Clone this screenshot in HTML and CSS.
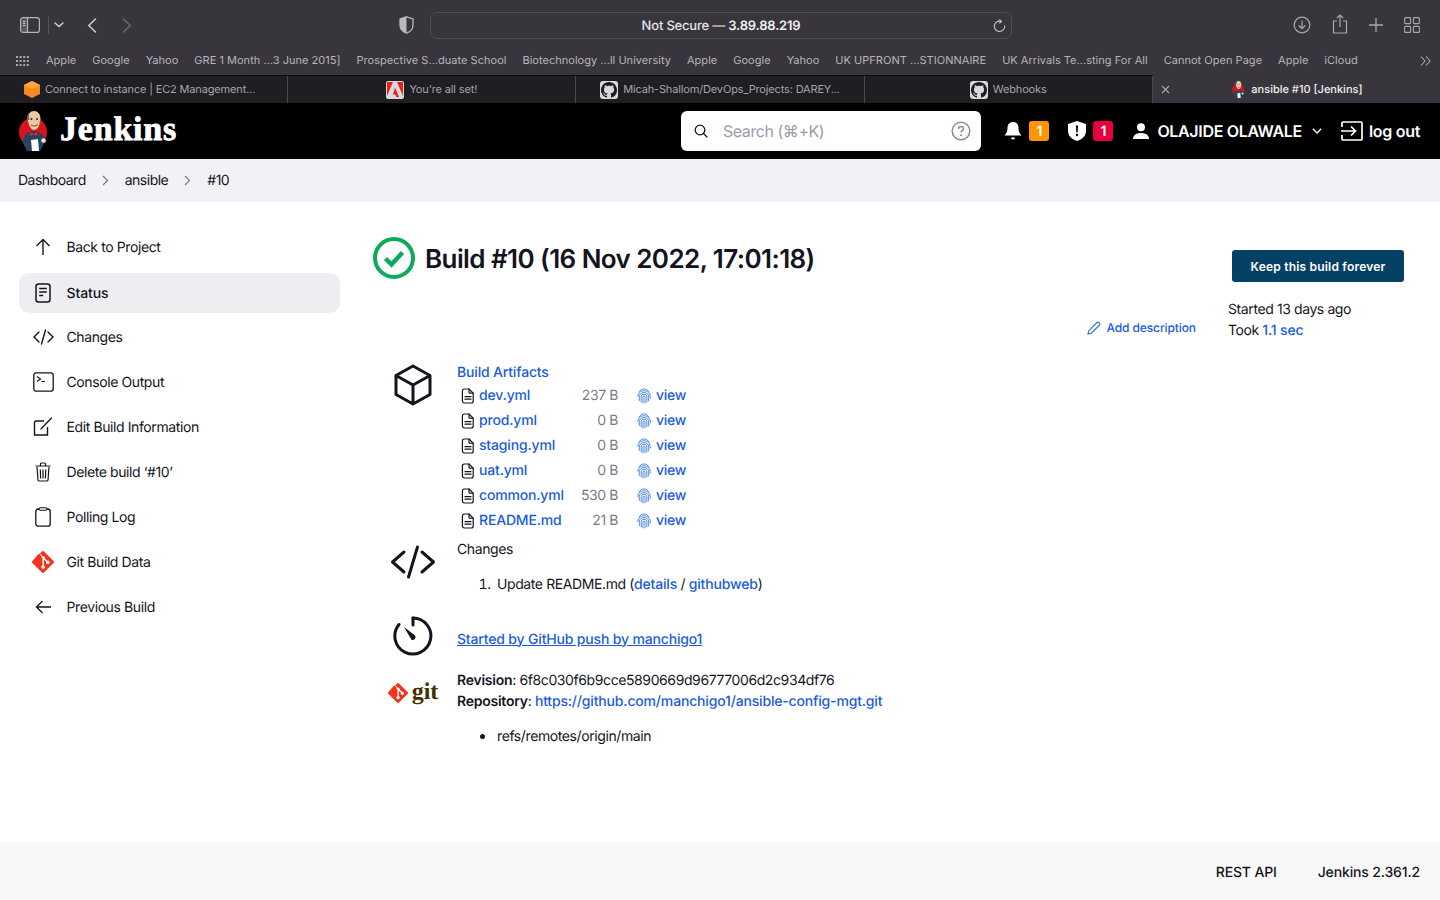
FILE: index.html
```html
<!DOCTYPE html>
<html lang="en">
<head>
<meta charset="utf-8">
<title>ansible #10 [Jenkins]</title>
<link rel="stylesheet" href="styles.css">
</head>
<body>
<svg class="defs" width="0" height="0" aria-hidden="true">
  <symbol id="doc" viewBox="0 0 14 16"><path d="M3 1h5l4.200 4.200V13a2 2 0 0 1-2 2H3.400A2 2 0 0 1 1.400 13V3A2 2 0 0 1 3 1z" fill="none" stroke="currentColor" stroke-width="1.200" stroke-linejoin="round"/><path d="M8 1.200v3a1 1 0 0 0 1 1h3M4 8.700h6M4 11.200h6" fill="none" stroke="currentColor" stroke-width="1.200" stroke-linecap="round"/></symbol>
  <symbol id="print" viewBox="0 0 16 16"><g fill="none" stroke="#2f74e0" stroke-width=".85" stroke-linecap="round"><path d="M3 3.800C4.300 1.900 6 1 8 1s3.700.9 5 2.800"/><path d="M1.800 8.500C1.800 5 4.500 2.800 8 2.800s6.200 2.200 6.200 5.700v1.500"/><path d="M3.300 12.500V8.700C3.300 6 5.400 4.600 8 4.600s4.700 1.400 4.700 4.100v4.300"/><path d="M5.200 14V8.800C5.200 7.200 6.400 6.300 8 6.300s2.900.9 2.900 2.500v5"/><path d="M7 15V9c0-.6.400-1 1-1s1 .4 1 1v5.800"/></g></symbol>
  <symbol id="ghub" viewBox="0 0 18 18"><rect width="18" height="18" rx="3" fill="#d9d9dc"/><path transform="translate(1 1)" fill="#1d1c20" d="M8 0C3.580 0 0 3.580 0 8c0 3.540 2.290 6.530 5.470 7.590.4.070.55-.17.55-.38 0-.19-.01-.82-.01-1.490-2.010.37-2.530-.49-2.690-.94-.09-.23-.48-.94-.82-1.130-.28-.15-.68-.52-.01-.53.63-.01 1.080.58 1.230.82.72 1.210 1.870.87 2.330.66.07-.52.28-.87.51-1.070-1.780-.2-3.640-.89-3.640-3.950 0-.87.31-1.590.82-2.150-.08-.2-.36-1.020.08-2.120 0 0 .67-.21 2.200.82.64-.18 1.320-.27 2-.27.68 0 1.360.09 2 .27 1.530-1.040 2.200-.82 2.200-.82.44 1.100.16 1.920.08 2.120.51.56.82 1.270.82 2.150 0 3.070-1.870 3.750-3.650 3.950.29.25.54.73.54 1.480 0 1.070-.01 1.930-.01 2.200 0 .21.15.46.55.38A8.013 8.013 0 0 0 16 8c0-4.420-3.580-8-8-8z"/></symbol>
  <symbol id="gitmark" viewBox="0 0 24 24"><path fill="#f5331c" d="M23.500 10.900 13.100.5a1.600 1.600 0 0 0-2.200 0L8.700 2.700l2.800 2.800a1.900 1.900 0 0 1 2.400 2.400l2.700 2.700a1.900 1.900 0 1 1-1.100 1.100l-2.500-2.500v6.600a1.900 1.900 0 1 1-1.600-.1V8a1.900 1.900 0 0 1-1-2.500L7.600 2.800.5 10.900a1.600 1.600 0 0 0 0 2.200l10.400 10.400a1.600 1.600 0 0 0 2.200 0l10.400-10.400a1.600 1.600 0 0 0 0-2.200z"/></symbol>
  <symbol id="butler" viewBox="0 0 32 40"><circle cx="14" cy="21" r="14" fill="#d8131f"/><path d="M4 32c0-7 4-12 10-12s12 4 13 11l-3 3-3 6H8z" fill="#22465e"/><path d="M8.500 8c0-5 2.500-8 6.500-8s6.500 3 6.500 8c0 2-.3 4-1.200 6-.8 2.500-2.600 5-5.300 5-3.200 0-5.500-5-6.500-11z" fill="#ecc9a4"/><path d="M8.500 9c-1-3 0-6 2-7.500C9.800 4 10 6 10.500 9zM21.500 5.500c.7 2 .5 5-.8 8-.4-2 .4-5 .8-8z" fill="#6f6a66"/><circle cx="12.500" cy="8" r=".9" fill="#222"/><circle cx="18" cy="8" r=".9" fill="#222"/><path d="M12 14c2 1.400 4.500 1.200 7-.3" fill="none" stroke="#7a3f24" stroke-width="1"/><path d="M11 21l3.500 1.800L18 21v4l-3.500-1.500L11 25z" fill="#ef1c24"/><path d="M12 29l7-1 1 12h-7z" fill="#fff"/><circle cx="24.500" cy="29.500" r="2.300" fill="#f4e3d0"/></symbol>
</svg>

<div class="chrome">
  <div class="toolbar">
    <div class="tool-left">
      <svg class="ti" width="20" height="16" viewBox="0 0 20 16"><rect x=".6" y=".6" width="18.800" height="14.800" rx="2.500" fill="none" stroke="#b5b4b8" stroke-width="1.200"/><rect x="1" y="1" width="6.500" height="14" fill="#8d8c91" opacity=".4"/><path d="M7.500 1v14" stroke="#b5b4b8" stroke-width="1.200"/><path d="M3 4.500h2.200M3 6.500h2.200M3 8.500h2.200" stroke="#cfcfd2" stroke-width="1"/></svg>
      <span class="tool-sep"></span>
      <svg width="10" height="6" viewBox="0 0 10 6"><path d="M1 1l4 3.500L9 1" fill="none" stroke="#d0d0d3" stroke-width="1.500" stroke-linecap="round"/></svg>
      <svg class="nav-back" width="10" height="15" viewBox="0 0 10 15"><path d="M8.500 1 1.800 7.500l6.700 6.500" fill="none" stroke="#c9c9cc" stroke-width="1.600" stroke-linecap="round"/></svg>
      <svg class="nav-fwd" width="10" height="15" viewBox="0 0 10 15"><path d="M1.500 1l6.700 6.500L1.500 14" fill="none" stroke="#69686d" stroke-width="1.600" stroke-linecap="round"/></svg>
    </div>
    <svg class="shield" width="15" height="18" viewBox="0 0 15 18"><path d="M7.500.8 14 3v6c0 4-3 7-6.500 8.200C4 16 1 13 1 9V3z" fill="none" stroke="#b9b8bc" stroke-width="1.300"/><path d="M7.500.8 1 3v6c0 4 3 7 6.500 8.200z" fill="#b9b8bc"/></svg>
    <div class="address">
      <span class="addr-text">Not Secure — <b>3.89.88.219</b></span>
      <svg class="reload" width="13" height="14" viewBox="0 0 13 14"><path d="M7.800 2.300A5.200 5.200 0 1 0 11.700 7" fill="none" stroke="#c9c9cc" stroke-width="1.100" stroke-linecap="round"/><path d="M6.300.5 8.500 2.400 6.300 4.300" fill="none" stroke="#c9c9cc" stroke-width="1.100"/></svg>
    </div>
    <div class="tool-right">
      <svg width="18" height="18" viewBox="0 0 18 18"><circle cx="9" cy="9" r="7.800" fill="none" stroke="#a9a8ac" stroke-width="1.200"/><path d="M9 4.500v8M5.800 9.500 9 12.700l3.200-3.200" fill="none" stroke="#a9a8ac" stroke-width="1.200"/></svg>
      <svg width="16" height="20" viewBox="0 0 16 20"><path d="M5 7H1.500v12h13V7H11" fill="none" stroke="#a9a8ac" stroke-width="1.200"/><path d="M8 13V1M4.800 4 8 1l3.200 3" fill="none" stroke="#a9a8ac" stroke-width="1.200"/></svg>
      <svg width="14" height="14" viewBox="0 0 14 14"><path d="M7 0v14M0 7h14" stroke="#a9a8ac" stroke-width="1.300"/></svg>
      <svg width="16" height="16" viewBox="0 0 16 16"><g fill="none" stroke="#a9a8ac" stroke-width="1.100"><rect x=".6" y=".6" width="6" height="6" rx="1"/><rect x="9.400" y=".6" width="6" height="6" rx="1"/><rect x=".6" y="9.400" width="6" height="6" rx="1"/><rect x="9.400" y="9.400" width="6" height="6" rx="1"/></g></svg>
    </div>
  </div>
  <div class="bookmarks">
    <svg class="grid-ico" width="13" height="10" viewBox="0 0 13 10"><g fill="#a9a8ac"><rect width="2" height="2"/><rect x="3.600" width="2" height="2"/><rect x="7.200" width="2" height="2"/><rect x="10.800" width="2" height="2"/><rect y="4" width="2" height="2"/><rect x="3.600" y="4" width="2" height="2"/><rect x="7.200" y="4" width="2" height="2"/><rect x="10.800" y="4" width="2" height="2"/><rect y="8" width="2" height="2"/><rect x="3.600" y="8" width="2" height="2"/><rect x="7.200" y="8" width="2" height="2"/><rect x="10.800" y="8" width="2" height="2"/></g></svg>
    <span>Apple</span><span>Google</span><span>Yahoo</span><span>GRE 1 Month ...3 June 2015]</span><span>Prospective S...duate School</span><span>Biotechnology ...ll University</span><span>Apple</span><span>Google</span><span>Yahoo</span><span>UK UPFRONT ...STIONNAIRE</span><span>UK Arrivals Te...sting For All</span><span>Cannot Open Page</span><span>Apple</span><span>iCloud</span>
    <svg class="more" width="11" height="10" viewBox="0 0 11 10"><path d="M1 .5 5 5 1 9.500M6 .5 10 5 6 9.500" fill="none" stroke="#a9a8ac" stroke-width="1.100"/></svg>
  </div>
  <div class="tabs">
    <div class="tab tab-first"><svg width="16" height="17" viewBox="0 0 16 17"><path d="M8 0l8 4v9l-8 4-8-4V4z" fill="#f58b1f"/><path d="M8 0l8 4-8 4-8-4z" fill="#fba83f"/></svg><span>Connect to instance | EC2 Management...</span></div>
    <div class="tab"><svg width="18" height="18" viewBox="0 0 18 18"><rect width="18" height="18" rx="2" fill="#d9d9dc"/><path d="M1 1h6L1 15zM17 1h-6l6 14zM9 6.500 13 16h-2.600l-1-2.600H7z" fill="#e3231b"/></svg><span>You're all set!</span></div>
    <div class="tab"><svg width="18" height="18"><use href="#ghub"/></svg><span>Micah-Shallom/DevOps_Projects: DAREY...</span></div>
    <div class="tab"><svg width="18" height="18"><use href="#ghub"/></svg><span>Webhooks</span></div>
    <div class="tab tab-active">
      <svg class="tab-x" width="9" height="9" viewBox="0 0 9 9"><path d="M1 1l7 7M8 1 1 8" stroke="#a9a8ac" stroke-width="1.100"/></svg>
      <svg class="tab-fav" width="14" height="17"><use href="#butler"/></svg><span>ansible #10 [Jenkins]</span>
    </div>
  </div>
</div>

<header class="jk-head">
  <div class="logo">
    <svg width="32" height="40"><use href="#butler"/></svg>
    <span class="logo-text">Jenkins</span>
  </div>
  <div class="search">
    <svg width="14" height="14" viewBox="0 0 14 14"><circle cx="6" cy="6" r="4.800" fill="none" stroke="#14141f" stroke-width="1.300"/><path d="M9.500 9.500 13 13" stroke="#14141f" stroke-width="1.300" stroke-linecap="round"/></svg>
    <span class="search-ph">Search (⌘+K)</span>
    <svg class="help" width="20" height="20" viewBox="0 0 20 20"><circle cx="10" cy="10" r="8.800" fill="none" stroke="#8a8a9c" stroke-width="1.500"/><path d="M7.500 8c0-1.500 1.100-2.400 2.500-2.400s2.500.9 2.500 2.200c0 1.800-2.500 1.900-2.500 3.800" fill="none" stroke="#8a8a9c" stroke-width="1.500"/><circle cx="10" cy="14.300" r="1" fill="#8a8a9c"/></svg>
  </div>
  <div class="head-actions">
    <div class="alert alert-bell">
      <svg width="18" height="20" viewBox="0 0 18 20"><path d="M9 1c-3.500 0-5.500 2.500-5.500 6 0 4-1.200 5.500-3 7.500h17c-1.800-2-3-3.500-3-7.500 0-3.500-2-6-5.500-6z" fill="#fff"/><path d="M7 16.500h4a2 2 0 0 1-4 0z" fill="#fff"/></svg>
      <span class="badge badge-o">1</span>
    </div>
    <div class="alert alert-shield">
      <svg width="18" height="20" viewBox="0 0 18 20"><path d="M9 0 18 3v7c0 5-4 8.500-9 10-5-1.500-9-5-9-10V3z" fill="#fff"/><path d="M8 4.500h2l-.3 7H8.300z" fill="#000"/><circle cx="9" cy="14" r="1.200" fill="#000"/></svg>
      <span class="badge badge-r">1</span>
    </div>
    <div class="user">
      <svg width="16" height="16" viewBox="0 0 16 16"><circle cx="8" cy="4.300" r="4" fill="#fff"/><path d="M0 16c0-4 3.500-6 8-6s8 2 8 6z" fill="#fff"/></svg>
      <span>OLAJIDE OLAWALE</span>
      <svg class="user-chev" width="10" height="6" viewBox="0 0 10 6"><path d="M.8.800 5 5 9.200.800" fill="none" stroke="#fff" stroke-width="1.300"/></svg>
    </div>
    <div class="logout">
      <svg width="22" height="20" viewBox="0 0 22 20"><path d="M1 6V2a1 1 0 0 1 1-1h18a1 1 0 0 1 1 1v16a1 1 0 0 1-1 1H2a1 1 0 0 1-1-1v-4" fill="none" stroke="#fff" stroke-width="1.700"/><path d="M0 10h14M10 5.500l4.500 4.500-4.500 4.500" fill="none" stroke="#fff" stroke-width="1.700"/></svg>
      <span>log out</span>
    </div>
  </div>
</header>

<nav class="crumbs">
  <span>Dashboard</span>
  <svg width="7" height="11" viewBox="0 0 7 11"><path d="M1 1l4.500 4.500L1 10" fill="none" stroke="#7a7a88" stroke-width="1.200"/></svg>
  <span>ansible</span>
  <svg width="7" height="11" viewBox="0 0 7 11"><path d="M1 1l4.500 4.500L1 10" fill="none" stroke="#7a7a88" stroke-width="1.200"/></svg>
  <span>#10</span>
</nav>

<main class="page">
  <aside class="side">
    <a class="item"><span class="item-ico"><svg width="18" height="18" viewBox="0 0 18 18"><path d="M9 17V2M2.500 8 9 1.500 15.500 8" fill="none" stroke="#14141f" stroke-width="1.400"/></svg></span>Back to Project</a>
    <a class="item item-active"><span class="item-ico"><svg width="16" height="20" viewBox="0 0 16 20"><rect x="1" y="1" width="14" height="18" rx="2.500" fill="none" stroke="#14141f" stroke-width="1.500"/><path d="M4.200 5.500h7.600M4.200 9h7.600M4.200 12.500h4" stroke="#14141f" stroke-width="1.500"/></svg></span>Status</a>
    <a class="item"><span class="item-ico"><svg width="21" height="16" viewBox="0 0 21 16"><path d="M6 3 1 8l5 5M15 3l5 5-5 5M12.500 1 8.500 15" fill="none" stroke="#14141f" stroke-width="1.400" stroke-linecap="round"/></svg></span>Changes</a>
    <a class="item"><span class="item-ico"><svg width="21" height="20" viewBox="0 0 21 20"><rect x=".8" y=".8" width="19.400" height="18.400" rx="2.500" fill="none" stroke="#14141f" stroke-width="1.300"/><path d="M4 4.500 7.500 7 4 9.500M8.500 9.500H12" fill="none" stroke="#14141f" stroke-width="1.200"/></svg></span>Console Output</a>
    <a class="item"><span class="item-ico"><svg width="20" height="20" viewBox="0 0 20 20"><path d="M11 4H3a1.500 1.500 0 0 0-1.500 1.500V18h13v-8" fill="none" stroke="#14141f" stroke-width="1.400"/><path d="M8 12 18.500 1" fill="none" stroke="#14141f" stroke-width="1.300" stroke-linecap="round"/></svg></span>Edit Build Information</a>
    <a class="item"><span class="item-ico"><svg width="16" height="20" viewBox="0 0 16 20"><path d="M2 5l1 13a1.500 1.500 0 0 0 1.500 1h7A1.500 1.500 0 0 0 13 18l1-13M.5 4h15M5.500 4V2a1 1 0 0 1 1-1h3a1 1 0 0 1 1 1v2M5.300 7.500l.3 9M8 7.500v9M10.700 7.500l-.3 9" fill="none" stroke="#14141f" stroke-width="1.200"/></svg></span>Delete build ‘#10’</a>
    <a class="item"><span class="item-ico"><svg width="16" height="20" viewBox="0 0 16 20"><rect x=".8" y="2" width="14.400" height="17.200" rx="2.500" fill="none" stroke="#14141f" stroke-width="1.300"/><rect x="4" y=".7" width="8" height="2.600" rx="1.200" fill="#fff" stroke="#14141f" stroke-width="1.100"/></svg></span>Polling Log</a>
    <a class="item"><span class="item-ico"><svg width="22" height="22"><use href="#gitmark"/></svg></span>Git Build Data</a>
    <a class="item"><span class="item-ico"><svg width="16" height="14" viewBox="0 0 16 14"><path d="M16 7H1.500M7.500 1 1.500 7l6 6" fill="none" stroke="#14141f" stroke-width="1.300"/></svg></span>Previous Build</a>
  </aside>

  <section class="content">
    <div class="title-row">
      <svg width="42" height="42" viewBox="0 0 42 42"><circle cx="21" cy="21" r="19" fill="none" stroke="#0cab5c" stroke-width="4"/><path d="M12.500 21.500 18.500 27.500 29.500 15.500" fill="none" stroke="#0cab5c" stroke-width="4.500"/></svg>
      <h1>Build #10 (16 Nov 2022, 17:01:18)</h1>
      <button class="keep">Keep this build forever</button>
    </div>
    <div class="meta-row">
      <a class="add-desc"><svg width="14" height="14" viewBox="0 0 14 14"><path d="M1 13l.8-3.300L10 1.500a1.300 1.300 0 0 1 1.900 0l.6.600a1.300 1.300 0 0 1 0 1.900L4.300 12.200z" fill="none" stroke="#2c6fdc" stroke-width="1.100"/></svg>Add description</a>
      <div class="timing">
        <div>Started 13 days ago</div>
        <div>Took <a class="link">1.1 sec</a></div>
      </div>
    </div>

    <div class="row row-art">
      <span class="row-ico"><svg width="40" height="42" viewBox="0 0 40 42"><path d="M20 2 37 11.500v19L20 40 3 30.500v-19zM3 11.500 20 21l17-9.500M20 21v19" fill="none" stroke="#14141f" stroke-width="3" stroke-linejoin="round"/></svg></span>
      <div class="row-body">
        <a class="link">Build Artifacts</a>
        <div class="artifacts">
          <svg width="14" height="16"><use href="#doc"/></svg><a class="link">dev.yml</a><span class="size">237 B</span><svg width="16" height="16"><use href="#print"/></svg><a class="link">view</a>
          <svg width="14" height="16"><use href="#doc"/></svg><a class="link">prod.yml</a><span class="size">0 B</span><svg width="16" height="16"><use href="#print"/></svg><a class="link">view</a>
          <svg width="14" height="16"><use href="#doc"/></svg><a class="link">staging.yml</a><span class="size">0 B</span><svg width="16" height="16"><use href="#print"/></svg><a class="link">view</a>
          <svg width="14" height="16"><use href="#doc"/></svg><a class="link">uat.yml</a><span class="size">0 B</span><svg width="16" height="16"><use href="#print"/></svg><a class="link">view</a>
          <svg width="14" height="16"><use href="#doc"/></svg><a class="link">common.yml</a><span class="size">530 B</span><svg width="16" height="16"><use href="#print"/></svg><a class="link">view</a>
          <svg width="14" height="16"><use href="#doc"/></svg><a class="link">README.md</a><span class="size">21 B</span><svg width="16" height="16"><use href="#print"/></svg><a class="link">view</a>
        </div>
      </div>
    </div>

    <div class="row row-changes">
      <span class="row-ico ico-changes"><svg width="46" height="34" viewBox="0 0 46 34"><path d="M14 7 2.500 17 14 27M32 7l11.500 10L32 27M27.500 2 18.500 32" fill="none" stroke="#14141f" stroke-width="3" stroke-linecap="round" stroke-linejoin="round"/></svg></span>
      <div class="row-body">
        <div>Changes</div>
        <ol class="list"><li>Update README.md (<a class="link">details</a> / <a class="link">githubweb</a>)</li></ol>
      </div>
    </div>

    <div class="row row-started">
      <span class="row-ico"><svg width="40" height="40" viewBox="0 0 40 40"><path d="M20 2a18 18 0 1 1-14 6.500" fill="none" stroke="#14141f" stroke-width="3" stroke-linecap="round"/><path d="M20 2v7" stroke="#14141f" stroke-width="3" stroke-linecap="round"/><path d="M11 11 22 19.500a2.800 2.800 0 0 1-3.500 4.200z" fill="#14141f"/></svg></span>
      <div class="row-body started-body"><a class="link link-u">Started by GitHub push by manchigo1</a></div>
    </div>

    <div class="row row-git">
      <span class="row-ico git-logo"><svg width="20" height="20"><use href="#gitmark"/></svg><span class="git-word">git</span></span>
      <div class="row-body">
        <div><b class="semi">Revision</b>: 6f8c030f6b9cce5890669d96777006d2c934df76</div>
        <div><b class="semi">Repository</b>: <a class="link">https://github.com/manchigo1/ansible-config-mgt.git</a></div>
        <ul class="list list-b"><li>refs/remotes/origin/main</li></ul>
      </div>
    </div>
  </section>
</main>

<footer class="foot">
  <span>REST API</span>
  <span>Jenkins 2.361.2</span>
</footer>
</body>
</html>
```

FILE: styles.css
```css
* { box-sizing: border-box; }
html, body { margin: 0; padding: 0; height: 100%; }
body {
  display: flex;
  flex-direction: column;
  height: 900px;
  overflow: hidden;
  font-family: Inter, "Liberation Sans", sans-serif;
  font-size: 14px;
  line-height: 21px;
  letter-spacing: -.4px;
  color: #14141f;
  background: #fff;
  text-rendering: geometricPrecision;
}
svg { display: block; flex: none; }
.defs { position: absolute; }

.chrome { background: #38363c; color: #b6b5b9; flex: none; }
.toolbar { height: 50px; display: flex; align-items: center; position: relative; padding: 0 20px; }
.tool-left { display: flex; align-items: center; }
.tool-sep { width: 1px; height: 18px; background: #55545a; margin: 0 5px 0 8px; }
.nav-back { margin-left: 23px; }
.nav-fwd { margin-left: 25px; }
.shield { margin-left: 267px; }
.address {
  width: 582px;
  height: 27px;
  margin-left: 16px;
  margin-top: 1px;
  padding-top: 1px;
  border: 1px solid #4f4e53;
  border-radius: 7px;
  display: flex;
  align-items: center;
  justify-content: center;
  position: relative;
  font-size: 13px;
  font-weight: 500;
  letter-spacing: -.2px;
  color: #e4e4e6;
}
.addr-text b { font-weight: 600; color: #f0f0f2; }
.reload { position: absolute; right: 5px; top: 6px; }
.tool-right { margin-left: auto; display: flex; align-items: center; gap: 21px; }
.tool-right svg:nth-child(2) { margin-top: -3px; }

.bookmarks {
  height: 25px;
  padding: 0 0 4px 16px;
  display: flex;
  align-items: center;
  font-size: 11px;
  letter-spacing: .025px;
  color: #b6b5b9;
  gap: 16px;
  white-space: nowrap;
  position: relative;
}
.grid-ico { margin-right: 1px; }
.more { position: absolute; right: 9px; top: 6px; }

.tabs { height: 28px; display: flex; background: #1f1e22; border-top: 1px solid #0c0c0e; }
.tab {
  flex: 1;
  display: flex;
  align-items: center;
  justify-content: center;
  gap: 5px;
  font-size: 11px;
  letter-spacing: -.15px;
  color: #a6a5a9;
  border-right: 1px solid #4a494e;
  position: relative;
  white-space: nowrap;
}
.tab-first svg { margin-left: -8px; }
.tab-active { background: #38363c; color: #f0f0f2; border-right: 0; margin-top: -1px; font-weight: 500; letter-spacing: 0; }
.tab-fav { margin-left: 2px; }
.tab-x { position: absolute; left: 8px; top: 10px; }

.jk-head { height: 56px; background: #000; display: flex; align-items: center; flex: none; padding: 0 20px 0 19px; color: #fff; }
.logo { display: flex; align-items: center; gap: 9px; width: 662px; }
.logo-text {
  font-family: "Liberation Serif", serif;
  font-weight: 700;
  font-size: 34px;
  line-height: 36px;
  letter-spacing: .8px;
  -webkit-text-stroke: .8px #fff;
  margin-top: -3px;
}
.search {
  width: 300px;
  height: 40px;
  background: #fff;
  border-radius: 6px;
  display: flex;
  align-items: center;
  padding: 0 10px 0 13px;
}
.search-ph { margin-left: 15px; font-size: 16px; letter-spacing: -.45px; color: #9c9ca8; flex: 1; }
.head-actions { margin-left: auto; display: flex; align-items: center; }
.alert { display: flex; align-items: center; gap: 7px; }
.alert-shield { margin-left: 19px; }
.badge {
  width: 20px;
  height: 20px;
  border-radius: 3px;
  display: flex;
  align-items: center;
  justify-content: center;
  font-size: 14px;
  font-weight: 600;
  letter-spacing: 0;
  color: #fff;
}
.badge-o { background: #ff9500; }
.badge-r { background: #e6003c; }
.user { display: flex; align-items: center; gap: 8px; margin-left: 20px; font-size: 16px; font-weight: 600; letter-spacing: -.33px; }
.user-chev { margin-left: 2px; }
.logout { display: flex; align-items: center; gap: 6px; margin-left: 19px; font-size: 16px; font-weight: 600; letter-spacing: -.3px; }

.crumbs {
  height: 43px;
  flex: none;
  background: #f2f2f6;
  display: flex;
  align-items: center;
  padding-left: 18px;
  gap: 16px;
  letter-spacing: -.5px;
}

.page { flex: 1; display: flex; min-height: 0; }
.side { width: 340px; flex: none; padding: 25px 0 0 19px; }
.item { height: 40px; margin-bottom: 5px; display: flex; align-items: center; padding-left: 12px; border-radius: 10px; }
.item-ico { width: 24px; height: 24px; display: flex; align-items: center; justify-content: center; margin-right: 11.500px; }
.item-active { background: #eeeef2; font-weight: 500; letter-spacing: -.1px; margin-top: 6px; margin-bottom: 4px; }

.content { flex: 1; padding: 35px 36px 0 33px; min-width: 0; }
.title-row { display: flex; align-items: flex-start; height: 42px; }
h1 { margin: 2px 0 0 10px; font-size: 26px; line-height: 42px; font-weight: 600; letter-spacing: -.58px; }
.keep {
  margin-left: auto;
  margin-top: 13px;
  width: 172px;
  height: 32px;
  background: #044165;
  color: #fff;
  border: 0;
  border-radius: 3px;
  font: 600 12px Inter, "Liberation Sans", sans-serif;
  letter-spacing: .2px;
}
.meta-row { display: flex; justify-content: flex-end; align-items: flex-end; margin-top: 20px; height: 42px; }
.add-desc { display: flex; align-items: center; gap: 5px; color: #1a5cdb; font-size: 12px; font-weight: 500; letter-spacing: -.1px; margin-right: 32px; margin-bottom: 3px; }
.timing { width: 176px; }
.link { color: #1a5cdb; font-weight: 500; letter-spacing: -.17px; }
.link-u { text-decoration: underline; }
.semi { font-weight: 600; letter-spacing: -.25px; }

.row { display: flex; }
.row-ico { width: 48px; margin-left: 16px; margin-right: 20px; flex: none; display: flex; justify-content: center; }
.row-art { margin-top: 20.500px; }
.row-art .row-ico { padding-top: 2px; }
.artifacts {
  display: grid;
  grid-template-columns: 14px 103px 40px 34px auto;
  grid-auto-rows: 25px;
  align-items: center;
  margin-left: 4px;
  justify-content: start;
}
.artifacts .link:nth-child(5n+2) { margin-left: 4px; }
.artifacts svg:nth-child(5n+4) { margin-left: 18px; margin-top: 1px; }
.artifacts svg:nth-child(5n+1) { margin-top: 2px; }
.artifacts .link:nth-child(5n) { margin-left: 4px; letter-spacing: -.3px; }
.size { color: #7b7b8c; text-align: right; white-space: nowrap; }

.row-changes { margin-top: 6px; }
.ico-changes { padding-top: 6px; }
.list { margin: 14px 0 0; padding-left: 40px; }
ol.list { padding-left: 37px; }
ol.list li { padding-left: 3px; }
.list-b li::marker { font-size: 18px; }
.row-started { margin-top: 21.500px; }
.started-body { padding-top: 12.500px; }
.row-git { margin-top: 13.500px; }
.git-logo { align-items: center; height: 24px; margin-top: 11px; gap: 4px; }
.git-word { font-family: "Liberation Serif", serif; font-weight: 700; font-size: 24px; line-height: 24px; letter-spacing: 0; color: #413000; margin-top: -2px; }
.list-b { margin-top: 13px; }

.foot {
  height: 58px;
  flex: none;
  background: #f8f8f9;
  display: flex;
  justify-content: flex-end;
  align-items: center;
  gap: 41px;
  padding: 3px 20px 0 0;
  font-weight: 500;
  letter-spacing: -.15px;
}
```
